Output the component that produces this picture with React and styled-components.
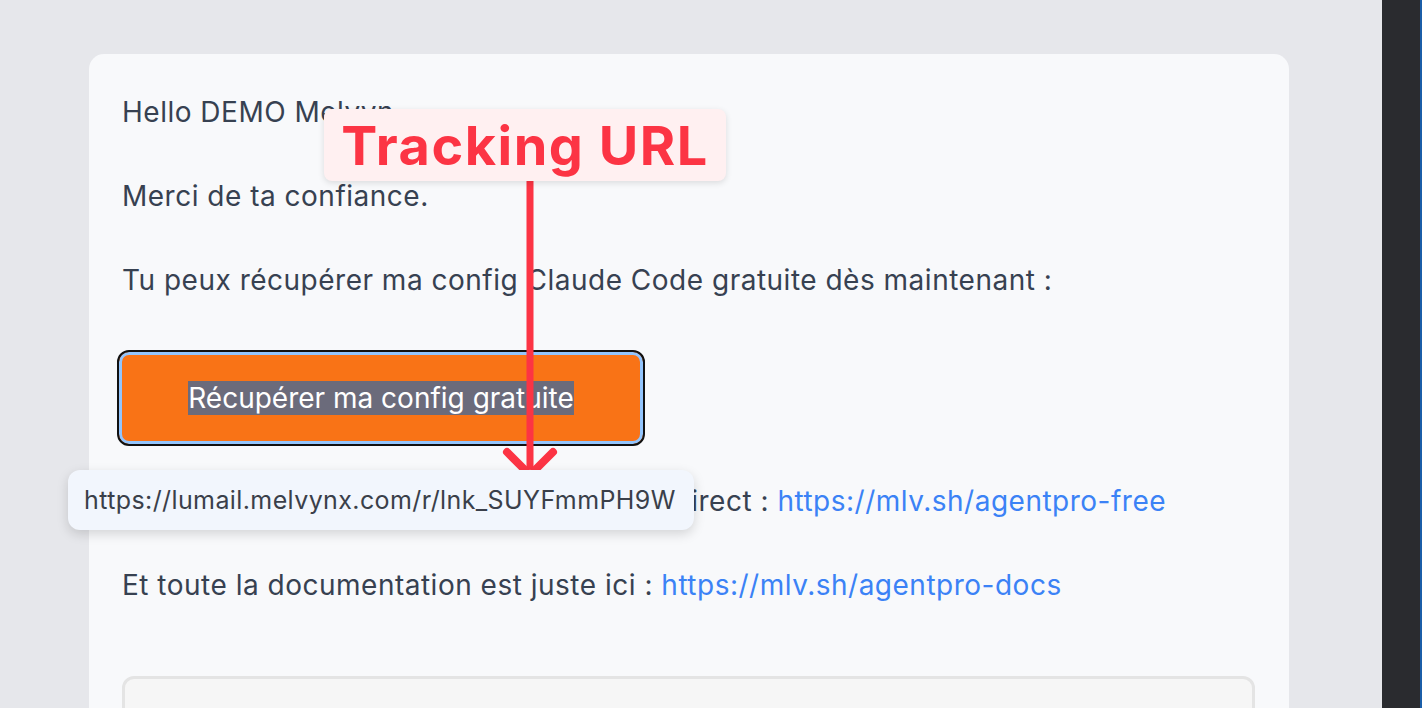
import React from 'react';
import styled, { createGlobalStyle } from 'styled-components';

const GlobalStyle = createGlobalStyle`
  html, body {
    margin: 0;
    padding: 0;
    height: 708px;
    overflow: hidden;
    background: #e6e7eb;
    font-family: Inter, "Noto Sans", sans-serif;
  }
`;

function App() {
  return (
    <>
      <GlobalStyle />
      <Screen>
        <Main>
          <Card>
            <Para>Hello DEMO Melvyn</Para>
            <Para>Merci de ta confiance.</Para>
            <Para>Tu peux récupérer ma config Claude Code gratuite dès maintenant :</Para>
            <ButtonRow>
              <CtaButton>
                <Selected>Récupérer ma config gratuite</Selected>
              </CtaButton>
            </ButtonRow>
            <Para>
              Si le bouton ne marche pas, voici le lien direct :{' '}
              <Link href="#">https://mlv.sh/agentpro-free</Link>
            </Para>
            <Para>
              Et toute la documentation est juste ici :{' '}
              <Link href="#">https://mlv.sh/agentpro-docs</Link>
            </Para>
            <Spacer />
            <CodeBox />

            <Arrow width="80" height="310" viewBox="0 0 80 310">
              <line x1="40" y1="0" x2="40" y2="290" stroke="#fc3444" strokeWidth="7" />
              <path d="M17 273 L40 296 L63 273" fill="none" stroke="#fc3444" strokeWidth="8" strokeLinecap="round" strokeLinejoin="round" />
            </Arrow>
            <Label>Tracking URL</Label>
            <Tooltip>https://lumail.melvynx.com/r/lnk_SUYFmmPH9W</Tooltip>
          </Card>
        </Main>
        <Sidebar />
      </Screen>
    </>
  );
}

const Screen = styled.div`
  display: flex;
  height: 708px;
`;

const Main = styled.div`
  flex: 1;
  padding: 54px 0 0 89px;
`;

const Sidebar = styled.div`
  width: 38px;
  background: #2a2b2f;
  border-right: 2px solid #1b5ea8;
`;

const Card = styled.div`
  position: relative;
  width: 1200px;
  box-sizing: border-box;
  height: 720px;
  background: #f8f9fb;
  border-radius: 15px;
  padding: 37px 34px 0 33px;
`;

const Para = styled.p`
  margin: 0 0 42px;
  font-size: 28px;
  line-height: 42px;
  color: #374151;
  letter-spacing: 0.5px;
  white-space: nowrap;
`;

const Link = styled.a`
  color: #3b82f6;
  text-decoration: none;
`;

const ButtonRow = styled.div`
  display: flex;
  margin: 49px 0 34px -5px;
`;

const CtaButton = styled.button`
  width: 528px;
  height: 96px;
  box-sizing: border-box;
  border: 2px solid #111111;
  border-radius: 12px;
  background: #f97316;
  box-shadow: inset 0 0 0 3px #93c5fd;
  display: flex;
  align-items: center;
  justify-content: center;
  font-family: Inter, "Noto Sans", sans-serif;
  font-size: 28px;
  color: #ffffff;
  padding: 0;
`;

const Selected = styled.span`
  background: #6b6b7b;
  line-height: 34px;
  display: inline-block;
`;

const Spacer = styled.div`
  height: 28px;
`;

const CodeBox = styled.div`
  height: 200px;
  background: #f6f6f6;
  border: 3px solid #e4e4e4;
  border-radius: 12px;
`;

const Arrow = styled.svg`
  position: absolute;
  left: 401px;
  top: 125px;
`;

const Label = styled.div`
  position: absolute;
  left: 235px;
  top: 55px;
  width: 402px;
  height: 72px;
  box-sizing: border-box;
  display: flex;
  align-items: center;
  justify-content: center;
  background: #fff0f1;
  border-radius: 8px;
  box-shadow: 0 2px 6px rgba(0, 0, 0, 0.12);
  color: #fc3444;
  font-size: 54px;
  font-weight: 700;
  letter-spacing: 1.5px;
`;

const Tooltip = styled.div`
  position: absolute;
  left: -21px;
  top: 416px;
  width: 626px;
  height: 60px;
  box-sizing: border-box;
  display: flex;
  align-items: center;
  padding-left: 16px;
  background: #f2f6fd;
  border-radius: 12px;
  box-shadow: 0 4px 12px rgba(0, 0, 0, 0.15);
  color: #3a3f4a;
  font-size: 25px;
  letter-spacing: 0.4px;
`;

export default App;
